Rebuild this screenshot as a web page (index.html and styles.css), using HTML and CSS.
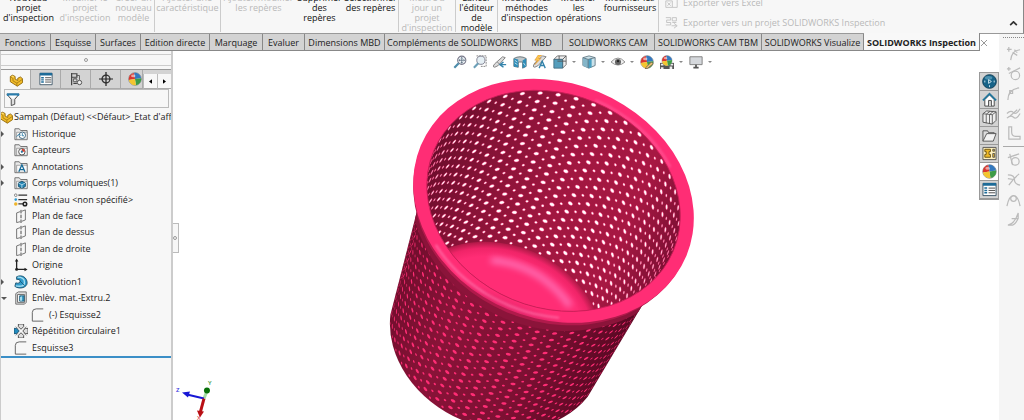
FILE: index.html
```
<!DOCTYPE html>
<html lang="fr">
<head>
<meta charset="utf-8">
<title>SOLIDWORKS</title>
<link rel="stylesheet" href="styles.css">
</head>
<body>
<svg class="defs" aria-hidden="true">
  <defs>
    <symbol id="part" viewBox="0 0 16 16"><path d="M1.500 4 4 2.500 7 4v3l3 1.500V6l3-1.500 2.500 2V11L9.500 15 1.500 10z" fill="#f3bd2b" stroke="#8d6509"/><path d="M1.500 4 4.500 6v3l4.500 2.500V15M9 11.500l6-4" fill="none" stroke="#a67b10"/><path d="m2.500 4 1.500-1 2 1.200-1.500 1z" fill="#ffe06f"/></symbol>
    <symbol id="list" viewBox="0 0 16 16"><path d="M1 1.500h14v13H1z" fill="#fff" stroke="#3a5365"/><path d="M1 1h14v3H1z" fill="#1d6b98"/><path d="M2.500 6.500h3M2.500 9h3M2.500 11.500h3" stroke="#1d6b98" stroke-width="1.600"/><path d="M7 6.500h7M7 9h7M7 11.500h7" stroke="#444"/></symbol>
    <symbol id="config" viewBox="0 0 16 16"><path d="M3 1v14M3 2h6v4H3M5 8h4M5 13h4" fill="none" stroke="#444" stroke-width="1.400"/><path d="M5 8h4v3H5z" fill="#ddd" stroke="#555"/><circle cx="12" cy="12" r="2.500" fill="#eee" stroke="#444"/><path d="M9 4h3v5" fill="none" stroke="#555"/></symbol>
    <symbol id="target" viewBox="0 0 16 16"><circle cx="8" cy="8" r="4.500" fill="none" stroke="#333" stroke-width="1.500"/><path d="M8 0v16M0 8h16" stroke="#222" stroke-width="1.400"/></symbol>
    <symbol id="ball" viewBox="0 0 16 16"><circle cx="8" cy="8" r="7.200" fill="#eee" stroke="#555" stroke-width=".6"/><path d="M8 8 1 9a7 7 0 0 1 6-8z" fill="#d9362f"/><path d="M8 8 7 1a7 7 0 0 1 8 6z" fill="#3479bf"/><path d="m8 8 7-1a7 7 0 0 1-6 8z" fill="#3d9c47"/><path d="m8 8 1 7a7 7 0 0 1-8-6z" fill="#f3c52e"/><ellipse cx="6" cy="4.500" rx="2.500" ry="1.600" fill="#fff" opacity=".55"/></symbol>
    <symbol id="funnel" viewBox="0 0 16 16"><path d="M1 2.500h14L10 8.500V14l-4 1.500v-7z" fill="#ddd" stroke="#444"/><path d="M1 1.500h14v3H1z" fill="#2b7dac"/><path d="M3 4h10l-5 4z" fill="#fff"/></symbol>
    <symbol id="folder" viewBox="0 0 16 16"><path d="M1 14.500V2h5l1.500 2H15v10.500z" fill="#e9e9e9" stroke="#666"/><path d="M3 14V6h12v8z" fill="#f8f8f8" stroke="#777" stroke-width=".7"/></symbol>
    <symbol id="history" viewBox="0 0 16 16"><use href="#folder"/><circle cx="9.500" cy="9.500" r="3.700" fill="#fff" stroke="#315a75"/><path d="M9.500 7v3h2M3 11l3-3 2 2" fill="none" stroke="#277ba8"/></symbol>
    <symbol id="sensor" viewBox="0 0 16 16"><use href="#folder"/><circle cx="9" cy="10" r="3.700" fill="#fff" stroke="#444"/><path d="M9 10V6.500A3.500 3.500 0 0 1 12.500 10z" fill="#d94332"/><circle cx="9" cy="10" r="1.300" fill="#2f799f"/></symbol>
    <symbol id="annot" viewBox="0 0 16 16"><use href="#folder"/><path d="m5.500 13.500 3.500-8 3.500 8M7 11h4" fill="none" stroke="#176b99" stroke-width="1.500"/></symbol>
    <symbol id="solid" viewBox="0 0 16 16"><use href="#folder"/><path d="m5 8 4-2 4 2v4l-4 2-4-2z" fill="#2384b3" stroke="#154b69"/><path d="m5 8 4 2 4-2M9 10v4" fill="none" stroke="#b7dceb"/></symbol>
    <symbol id="material" viewBox="0 0 16 16"><path d="M5 2.500h10M5 7.500h10M5 12.500h7" stroke="#333" stroke-width="1.400"/><circle cx="2" cy="2.500" r="1.500" fill="#fff" stroke="#777"/><circle cx="2" cy="7.500" r="1.500" fill="#2d9ad0"/><circle cx="2" cy="12.500" r="2" fill="#eeb42a"/><circle cx="12.500" cy="12.500" r="2" fill="#fff" stroke="#222" stroke-width="1.800"/></symbol>
    <symbol id="plane" viewBox="0 0 16 16"><path d="M3 4.500 7 3M9 2.500l4-1.500v11.500L9 14M7 14.500 3 15.500v-11" fill="none" stroke="#666"/><path d="M8 1v15" stroke="#333" stroke-dasharray="4 1.500"/></symbol>
    <symbol id="origin" viewBox="0 0 16 16"><path d="M3 3v10h10" fill="none" stroke="#222" stroke-width="1.500"/><path d="M1 4l2-3.500L5 4zM12 11l3.500 2L12 15z" fill="#222"/><circle cx="3" cy="13" r="1.700" fill="#222"/></symbol>
    <symbol id="revolve" viewBox="0 0 16 16"><path d="M3 2c6-3 12 1 12 7 0 5-8 8-14 4l1-4c3 1 5 0 5-2S5 5 3 5z" fill="#2f9acb" stroke="#174d69"/><path d="M4 2.500c5 0 8 2 8 6s-4 5-10 4" fill="none" stroke="#a4ddef" stroke-width="1.500"/><path d="m7 7 5 5" stroke="#16597b"/></symbol>
    <symbol id="cut" viewBox="0 0 16 16"><path d="m2 3 3-2h9v12l-2 2H2z" fill="#dedede" stroke="#666"/><path d="M4 4h8v9H4z" fill="#f5f5f5" stroke="#666"/><path d="M6.500 5.500h5v6h-5z" fill="#3c9fc9" stroke="#1e5c79"/><path d="M7 11V7l2-1v5z" fill="#b9e4f2"/></symbol>
    <symbol id="sketch" viewBox="0 0 16 16"><path d="M14 1H6Q1.500 1 1.500 5v10H14" fill="none" stroke="#555"/></symbol>
    <symbol id="pattern" viewBox="0 0 16 16"><path d="M0 5h3l3 3-3 3H0z" fill="#248bbd" stroke="#184e6d"/><path d="M16 5h-3l-3 3 3 3h3zM5 0h6v3L8 6 5 3zM5 16h6v-3l-3-3-3 3z" fill="#ddd" stroke="#444"/><path d="m2 3 3 3m6 0 3-3M2 13l3-3m6 0 3 3" stroke="#777"/></symbol>
    <symbol id="zoomfit" viewBox="0 0 16 16"><circle cx="10" cy="6" r="4.700" fill="#edf4f7" stroke="#778" stroke-width="1.200"/><path d="m1.500 14.500 5-5" stroke="#4d8caa" stroke-width="2.500"/><path d="M10 4v4M8 6h4" stroke="#678"/><path d="m10 2 1.500 2h-3zM10 10 8.500 8h3zM6 6l2-1.500v3zM14 6l-2-1.500v3z" fill="#678"/></symbol>
    <symbol id="zoomarea" viewBox="0 0 16 16"><path d="M4 1h11v12H9" fill="none" stroke="#777" stroke-dasharray="2 1"/><circle cx="9" cy="6" r="4.700" fill="#e5eff4" stroke="#778"/><path d="m1 14.500 5-5" stroke="#6ca0b8" stroke-width="2.500"/></symbol>
    <symbol id="prev" viewBox="0 0 16 16"><path d="m2 10 9-8 3 1-8 9-4 2-2-1z" fill="#ddd" stroke="#777"/><path d="m5 8 3 3" stroke="#777"/><path d="M15 11H9m3-3-4 3 4 3" fill="none" stroke="#3583ab" stroke-width="1.700"/></symbol>
    <symbol id="section" viewBox="0 0 16 16"><path d="M1 4q7-4 14 0v9l-4 2V8H6v6l-5-1z" fill="#c1c8cb" stroke="#606b70"/><path d="M1 4 6 5v9l-5-1zM11 6l4-2v9l-4 2z" fill="#2e8db8"/><path d="m2 6 3 2M2 9l3 2m7-2 2 3" stroke="#cbe8f2"/></symbol>
    <symbol id="annview" viewBox="0 0 16 16"><path d="m2 9 9-8 4 1-9 10-4 2-2-1z" fill="#ddd" stroke="#777"/><path d="m6 0-4 6h3l-3 5 7-7H6l4-4z" fill="#ffc94d" stroke="#d48627" stroke-width=".6"/><path d="m7 15 3.500-8 3.500 8m-6-3h5" fill="none" stroke="#3182aa" stroke-width="1.500"/></symbol>
    <symbol id="orient" viewBox="0 0 16 16"><path d="m1 5 4-4h10v10l-4 4V5z" fill="#eee" stroke="#666"/><path d="M1 5h10v10H1z" fill="#559ebc" stroke="#416b80"/><path d="m11 5 4-4M7 1v4m8 2H5" stroke="#555" fill="none"/></symbol>
    <symbol id="cube" viewBox="0 0 16 16"><path d="m1 3 7-2 7 2v9l-7 3-7-3z" fill="#cbe2ea" stroke="#607681"/><path d="m1 3 6 2v10l-6-3z" fill="#85b5c8"/><path d="m7 5 4-1v10l-4 1z" fill="#4aa0c3"/><path d="m1 3 6 2 8-2M7 5v10" fill="none" stroke="#607681"/></symbol>
    <symbol id="eye" viewBox="0 0 16 16"><path d="M0 8q8-9 16 0-8 7-16 0z" fill="#eee" stroke="#888"/><circle cx="8" cy="8" r="3.500" fill="#666"/><circle cx="8" cy="7" r="1.300" fill="#222"/></symbol>
    <symbol id="appearance" viewBox="0 0 16 16"><use href="#ball"/><path d="m7 14 6-6 2 2-6 5-3 1z" fill="#f0c477" stroke="#79664d"/></symbol>
    <symbol id="scene" viewBox="0 0 16 16"><path d="M0 9h16v7H0z" fill="#555"/><path d="M1 10h3v2H1zm11 0h3v2h-3zM1 14h3v2H1zm10-1h3v3h-3z" fill="#eee"/><use href="#ball" width="13" height="13" x="1.500"/></symbol>
    <symbol id="screen" viewBox="0 0 16 16"><path d="M1 2h14v9H1z" fill="#d5d8dc" stroke="#777"/><path d="M8 11v3m-3 .5h6" stroke="#555" stroke-width="2"/></symbol>
    <symbol id="globe" viewBox="0 0 16 16"><circle cx="8" cy="8" r="7.300" fill="#176388" stroke="#113f56"/><ellipse cx="7" cy="4" rx="4" ry="2" fill="#66a7c2" opacity=".7"/><path d="m7 6 3 2-3 2zM3 7v2m10-2v2M8 12v2" stroke="#d2e7ef" fill="none"/></symbol>
    <symbol id="home" viewBox="0 0 16 16"><path d="M3 8v7h10V8L8 3z" fill="#fff" stroke="#444"/><path d="M7 15V9h3v6" fill="#ddd" stroke="#444"/><path d="m1 9 7-7 7 7" fill="none" stroke="#24769b" stroke-width="2"/></symbol>
    <symbol id="books" viewBox="0 0 16 16"><path d="M1 4 5 1l10 1v9l-4 4-10-2z" fill="#eee" stroke="#555"/><path d="M4.500 4.500V14M8 5v9.500M11 5v10M1 4l10 1 4-3M4.500 4.500l4-3M8 5l4-3.500" fill="none" stroke="#555" stroke-width=".9"/></symbol>
    <symbol id="open" viewBox="0 0 16 16"><path d="M1 14V3h5l1 2h6v3" fill="#ddd" stroke="#555"/><path d="m1 14 4-8h10l-3 8z" fill="#f3f3f3" stroke="#555"/></symbol>
    <symbol id="palette" viewBox="0 0 16 16"><path d="M1 1.500h14v13H1z" fill="#fff2bd" stroke="#555"/><path d="M3 3.500h6v2.500H7.500v3H9V12H3V9h1.500V6H3z" fill="#efb927" stroke="#6d5514"/><path d="M11.500 3.500h2v2h-2zM11.500 8h2v4h-2z" fill="#efb927" stroke="#555"/></symbol>
  </defs>
</svg>

<header class="ribbon">
  <div class="commands">
    <button class="cmd w58">Nouveau<br>projet<br>d'inspection</button>
    <button class="cmd w55" disabled>Modifier le<br>projet<br>d'inspection</button>
    <button class="cmd w42 end" disabled>Créer un<br>nouveau<br>modèle</button>
    <button class="cmd w66 end" disabled>Ajouter une<br>caractéristique</button>
    <button class="cmd w74" disabled>Ajouter/modifier<br>les repères</button>
    <button class="cmd w47">Supprimer<br>des<br>repères</button>
    <button class="cmd w55 end">Sélectionner<br>des repères</button>
    <button class="cmd w58 end" disabled>Mettre à<br>jour un<br>projet<br>d'inspection</button>
    <button class="cmd w42 end">Lancer<br>l'éditeur<br>de<br>modèle</button>
    <button class="cmd w58">Modifier les<br>méthodes<br>d'inspection</button>
    <button class="cmd w47">Modifier<br>les<br>opérations</button>
    <button class="cmd w58 end">Modifier les<br>fournisseurs</button>
  </div>
  <div class="exports">
    <button class="export" disabled><svg viewBox="0 0 16 16"><path d="M1 6h8v8H1zM9 4h6v10H9M3 8l4 4m0-4-4 4m4-8h6M4 2h8"/></svg>Exporter vers Excel</button>
    <button class="export" disabled><svg viewBox="0 0 16 16"><path d="M1 2h6v3H2v3h5v3H1M9 2h5v4H9zM9 8h5M8 12h6m-3-3 4 3-4 3"/></svg>Exporter vers un projet SOLIDWORKS Inspection</button>
  </div>
  <button class="collapse" aria-label="Réduire"><svg viewBox="0 0 10 6"><path d="m1 5 4-4 4 4"/></svg></button>
</header>

<div class="tabrow">
  <nav class="tabs">
    <button>Fonctions</button><button>Esquisse</button><button>Surfaces</button><button>Edition directe</button><button>Marquage</button><button>Evaluer</button><button>Dimensions MBD</button><button>Compléments de SOLIDWORKS</button><button>MBD</button><button>SOLIDWORKS CAM</button><button>SOLIDWORKS CAM TBM</button><button>SOLIDWORKS Visualize</button><button class="active">SOLIDWORKS Inspection</button>
  </nav>
  <button class="close" aria-label="Fermer"><svg viewBox="0 0 8 8"><path d="m1 1 6 6m0-6-6 6"/></svg></button>
</div>

<main class="work">
  <aside class="panel">
    <div class="grip"><i class="knob"></i></div>
    <div class="paneltabs">
      <button class="active" aria-label="Arbre"><svg><use href="#part"/></svg></button>
      <button aria-label="Propriétés"><svg><use href="#list"/></svg></button>
      <button aria-label="Configurations"><svg><use href="#config"/></svg></button>
      <button aria-label="Cotes"><svg><use href="#target"/></svg></button>
      <button class="cutoff" aria-label="Apparences"><svg><use href="#ball"/></svg></button>
      <button class="arrow" aria-label="Précédent"><svg viewBox="0 0 4 6"><path d="M4 0v6L0 3z"/></svg></button>
      <button class="arrow" aria-label="Suivant"><svg viewBox="0 0 4 6"><path d="m0 0 4 3-4 3z"/></svg></button>
    </div>
    <label class="filter"><svg><use href="#funnel"/></svg><input type="text" aria-label="Filtre"></label>
    <ul class="tree">
      <li class="root"><svg><use href="#part"/></svg>Sampah (Défaut) &lt;&lt;Défaut&gt;_Etat d'affi</li>
      <li class="closed"><svg><use href="#history"/></svg>Historique</li>
      <li><svg><use href="#sensor"/></svg>Capteurs</li>
      <li class="closed"><svg><use href="#annot"/></svg>Annotations</li>
      <li class="closed"><svg><use href="#solid"/></svg>Corps volumiques(1)</li>
      <li><svg><use href="#material"/></svg>Matériau &lt;non spécifié&gt;</li>
      <li><svg><use href="#plane"/></svg>Plan de face</li>
      <li><svg><use href="#plane"/></svg>Plan de dessus</li>
      <li><svg><use href="#plane"/></svg>Plan de droite</li>
      <li><svg><use href="#origin"/></svg>Origine</li>
      <li class="closed"><svg><use href="#revolve"/></svg>Révolution1</li>
      <li class="opened"><svg><use href="#cut"/></svg>Enlèv. mat.-Extru.2</li>
      <li class="child"><svg><use href="#sketch"/></svg>(-) Esquisse2</li>
      <li><svg><use href="#pattern"/></svg>Répétition circulaire1</li>
      <li><svg><use href="#sketch"/></svg>Esquisse3</li>
    </ul>
  </aside>

  <section class="view">
    <svg class="model" viewBox="172 51 827 369" preserveAspectRatio="xMidYMin meet">
      <defs>
        <linearGradient id="inner"><stop offset="0" stop-color="#6b0d2b"/><stop offset=".2" stop-color="#851236"/><stop offset=".5" stop-color="#a01740"/><stop offset=".8" stop-color="#a71843"/><stop offset="1" stop-color="#7c1033"/></linearGradient>
        <linearGradient id="outer"><stop offset="0" stop-color="#6d0d2b"/><stop offset=".3" stop-color="#891338"/><stop offset=".65" stop-color="#7d1033"/><stop offset="1" stop-color="#570822"/></linearGradient>
        <radialGradient id="floor"><stop offset="0" stop-color="#ff2d75"/><stop offset=".84" stop-color="#ff2d75"/><stop offset=".93" stop-color="#f02468"/><stop offset="1" stop-color="#b01947"/></radialGradient>
        <linearGradient id="rim" x1="0" y1="0" x2="0" y2="1"><stop offset="0" stop-color="#ff2d75"/><stop offset=".95" stop-color="#ff2d75"/><stop offset="1" stop-color="#e3256a"/></linearGradient>
        <clipPath id="mouth"><ellipse rx="130" ry="107"/></clipPath>
        <clipPath id="body"><path d="M-124 50 -107 168A110 91 0 0 0 107 168L124 50A144 123 0 0 1-124 50z"/></clipPath>
        <filter id="soft" x="-20%" y="-40%" width="140%" height="180%"><feGaussianBlur stdDeviation="3"/></filter>
        <filter id="edge" x="-20%" y="-20%" width="140%" height="140%"><feGaussianBlur stdDeviation="1"/></filter>
      </defs>
      <g transform="translate(553 201) rotate(22.600)">
        <path d="M-124 50 -107 168A110 91 0 0 0 107 168L124 50z" fill="url(#outer)"/>
        <g clip-path="url(#body)"><path id="outerHoles" fill="#ff2d75"/><ellipse cy="5" rx="140" ry="119" fill="none" stroke="#8b143a" stroke-width="7"/></g>
        <ellipse cy="2" rx="143" ry="119" fill="#b01a4b"/>
        <ellipse rx="144" ry="118" fill="url(#rim)"/>
        <path d="M-92 86A139 114 0 0 0 50 106" fill="none" stroke="#ff66a2" stroke-width="2" filter="url(#edge)"/>
        <path d="M0-109A133 109 0 0 1 95-76" fill="none" stroke="#ff5594" stroke-width="2" filter="url(#edge)"/>
        <ellipse rx="130" ry="107" fill="url(#inner)"/>
        <g clip-path="url(#mouth)">
          <path id="innerHoles" fill="#fff" stroke="#ff2d75" stroke-width=".4"/>
          <ellipse cy="144" rx="107" ry="89" fill="url(#floor)"/>
          <path d="M-35 79Q12 64 56 91" fill="none" stroke="#ff70b6" stroke-width="6" filter="url(#soft)"/>
        </g>
        <ellipse rx="130" ry="107" fill="none" stroke="#c81d56" stroke-width=".8"/>
      </g>
      <g class="triad">
        <path d="m203 399 4-10" stroke="#a5dda5" stroke-width="3"/><circle cx="206" cy="391" r="3" fill="#087008"/>
        <path d="m203 399-17-4" stroke="#1717d5" stroke-width="2"/><path d="m181 393 8-1-2 6z" fill="#1717d5"/>
        <path d="m203 399-4 15" stroke="#b80f14" stroke-width="3"/><path d="m196 411 7 1-4 6z" fill="#b80f14"/>
        <text x="175" y="392" fill="#3a3ae0">Z</text><text x="207" y="385" fill="#4ba04b">Y</text><text x="196" y="420" fill="#e05050">X</text>
      </g>
    </svg>
    <button class="splitter" aria-label="Volet"><i class="knob"></i></button>
    <div class="hud">
      <button aria-label="Zoom au mieux"><svg><use href="#zoomfit"/></svg></button><button aria-label="Zoom fenêtre"><svg><use href="#zoomarea"/></svg></button><button aria-label="Vue précédente"><svg><use href="#prev"/></svg></button><button aria-label="Vue en coupe"><svg><use href="#section"/></svg></button><button aria-label="Vues d'annotations"><svg><use href="#annview"/></svg></button><button class="drop" aria-label="Orientation"><svg><use href="#orient"/></svg></button><button class="drop" aria-label="Style d'affichage"><svg><use href="#cube"/></svg></button><button class="drop" aria-label="Cacher ou montrer"><svg><use href="#eye"/></svg></button><button aria-label="Apparence"><svg><use href="#appearance"/></svg></button><button class="drop" aria-label="Scène"><svg><use href="#scene"/></svg></button><button class="drop" aria-label="Paramètres de vue"><svg><use href="#screen"/></svg></button>
    </div>
    <div class="taskpane">
      <button aria-label="Plateforme"><svg><use href="#globe"/></svg></button><button aria-label="Accueil"><svg><use href="#home"/></svg></button><button aria-label="Bibliothèque"><svg><use href="#books"/></svg></button><button aria-label="Fichiers"><svg><use href="#open"/></svg></button><button aria-label="Palette de vues"><svg><use href="#palette"/></svg></button><button class="active" aria-label="Apparences"><svg><use href="#ball"/></svg></button><button aria-label="Propriétés"><svg><use href="#list"/></svg></button>
    </div>
  </section>
</main>

<aside class="sidebar">
  <button aria-label="Congé"><svg viewBox="0 0 16 16"><path d="M3 1v5M1 3.500h5M5 15C6 8 8 5 15 4M7 7l5 3M9 4l3 3"/></svg></button>
  <button aria-label="Tangente"><svg viewBox="0 0 16 16"><path d="M3 1v4M1 3h4M3 8l12-6"/><circle cx="10" cy="10" r="4.500"/></svg></button>
  <button aria-label="Arc"><svg viewBox="0 0 16 16"><path d="M2 15C2 7 6 3 14 2"/><path d="M4 5h3v3H4z"/></svg></button>
  <button aria-label="Courbes"><svg viewBox="0 0 16 16"><path d="M1 8q4-4 7-1t7-4M1 13q4-4 7-1t7-4M4 11l8-7"/></svg></button>
  <button aria-label="Angle"><svg viewBox="0 0 16 16"><path d="M3 1v13h12v-3H10Q6 11 6 6V1z"/></svg></button>
  <hr>
  <button aria-label="Cercle"><svg viewBox="0 0 16 16"><path d="M2 6 14 2M4 2l3 12"/><circle cx="10" cy="10" r="4"/></svg></button>
  <button aria-label="Intersection"><svg viewBox="0 0 16 16"><path d="M2 3q7 0 7 5t6 6M14 2Q8 7 3 14M2 7l6 1"/></svg></button>
  <button aria-label="Parabole"><svg viewBox="0 0 16 16"><path d="M1 15C4 0 12 0 15 15"/><circle cx="8" cy="7" r="3"/></svg></button>
  <button aria-label="Surface"><svg viewBox="0 0 16 16"><path d="M2 14Q9 13 13 1v6q-3 6-6 7zM6 7h7"/></svg></button>
</aside>
<script src="basket.js"></script>
</body>
</html>
```
FILE: styles.css
```
* { box-sizing: border-box; }
body {
  margin: 0;
  min-height: 100vh;
  display: grid;
  grid-template: 34px 17px 1fr / 1fr 25px;
  background: #fff;
  color: #222;
  font: 9px/10px "Open Sans", "Noto Sans", sans-serif;
  overflow: hidden;
}
button { margin: 0; padding: 0; border: 0; background: none; color: inherit; font: inherit; }
svg { display: block; }
.defs { position: absolute; width: 0; height: 0; }

.ribbon {
  grid-column: 1 / 3;
  display: flex;
  background: #f7f7f7;
  border-right: 1px solid #888;
  border-bottom: 1px solid #999;
  overflow: hidden;
}
.commands { display: flex; height: 39px; margin-top: -7px; flex: none; }
.cmd { display: flex; justify-content: center; text-align: center; white-space: nowrap; font-weight: 500; color: #111; }
.cmd:disabled, .export:disabled { color: #b9b9b9; font-weight: 400; }
.cmd.end { border-right: 1px solid #ccc; }
.w42 { width: 42px; }
.w47 { width: 47px; }
.w55 { width: 56px; }
.w58 { width: 57px; }
.w66 { width: 66px; }
.w74 { width: 75px; }
.exports { display: flex; flex-direction: column; gap: 7px; flex: 1; margin-top: -4px; padding-left: 6px; }
.export { display: flex; align-items: center; gap: 5px; height: 13px; white-space: nowrap; }
.export svg { width: 13px; height: 13px; fill: none; stroke: #bbb; }
.collapse { align-self: flex-end; padding: 0 5px 7px; }
.collapse svg { width: 9px; height: 5px; fill: none; stroke: #333; stroke-width: 2; }

.tabrow { display: flex; }
.tabs { display: grid; grid-template-columns: 51px 45px 45px 69px 53px 42px 80px 136px 42px 92px 107px 102px 116px; }
.tabs button { padding-top: 1px; background: #d3d3d3; border-right: 1px solid #888; border-bottom: 1px solid #888; white-space: nowrap; }
.tabs .active { background: #f8f8f8; font-weight: 700; margin-top: -1px; padding-top: 2px; }
.close { padding: 5px 0 0; align-self: flex-start; }
.close svg { width: 8px; height: 8px; fill: none; stroke: #999; }

.work { display: grid; grid-template-columns: 173px 1fr; min-width: 0; }
.panel { background: #f7f7f7; border-right: 2px solid #ccc; border-left: 1px solid #ccc; padding-top: 3px; overflow: hidden; }
.grip { height: 12px; border: solid #ccc; border-width: 1px 0; display: flex; justify-content: center; align-items: center; }
.knob { width: 4px; height: 4px; border: 1px solid #999; border-radius: 50%; }
.paneltabs { display: flex; height: 20px; margin-top: 3px; border-top: 1px solid #999; background: #d3d3d3; }
.paneltabs button { width: 30px; border-right: 1px solid #aaa; border-bottom: 1px solid #aaa; display: flex; justify-content: center; align-items: center; }
.paneltabs .active { background: #f7f7f7; border-bottom: 0; }
.paneltabs svg { width: 14px; height: 14px; flex: none; }
.paneltabs .cutoff { width: 22px; padding-left: 6px; }
.paneltabs .arrow { width: 14px; margin-top: 4px; background: #f7f7f7; border-left: 1px solid #bbb; border-right: 0; }
.paneltabs .arrow svg { width: 3px; height: 5px; }
.filter { display: flex; align-items: center; height: 19px; margin: 0 2px 0 3px; padding-left: 1px; border: 1px solid #bbb; }
.filter svg { width: 14px; height: 14px; flex: none; }
.filter input { flex: 1; min-width: 0; border: 0; background: none; outline: 0; font: inherit; }
.tree { display: grid; grid-auto-rows: 1fr; height: 250px; margin: 0; padding: 1px 0 0; list-style: none; border-bottom: 2px solid #3b8fc7; }
.tree li { position: relative; display: flex; align-items: center; gap: 4px; padding-left: 13px; white-space: nowrap; overflow: hidden; }
.tree svg { width: 14px; height: 14px; flex: none; }
.tree .root { padding-left: 0; gap: 1px; margin-left: -2px; }
.tree .child { padding-left: 30px; }
.tree .closed::before, .tree .opened::before { content: ""; position: absolute; left: 0; border: 3px solid transparent; }
.tree .closed::before { border-left-color: #555; border-right-width: 0; }
.tree .opened::before { border-top-color: #555; border-bottom-width: 0; }

.view { position: relative; overflow: hidden; }
.model { width: 100%; position: absolute; top: 0; left: 0; }
.triad text { font: 600 6px "Open Sans", sans-serif; }
.splitter { position: absolute; left: -2px; top: 172px; width: 8px; height: 30px; background: #f7f7f7; border: 1px solid #bbb; border-left: 0; display: flex; align-items: center; justify-content: center; }
.hud { position: absolute; top: 4px; left: 0; right: 0; padding-left: 280px; display: flex; gap: 6px; }
.hud button { display: flex; align-items: center; height: 14px; flex: none; }
.hud svg { width: 14px; height: 14px; }
.hud .drop::after { content: ""; border: solid transparent; border-width: 2px 2px 0; border-top-color: #888; margin-left: 5px; }
.taskpane { position: absolute; right: 0; top: 21px; width: 20px; border: 1px solid #999; background: #d3d3d3; }
.taskpane button { display: flex; align-items: center; justify-content: center; width: 18px; height: 18px; border-bottom: 1px solid #999; }
.taskpane .active { background: #fff; }
.taskpane svg { width: 15px; height: 15px; }

.sidebar { grid-area: 2 / 2 / 4 / 3; background: #f5f5f5; padding: 12px 0 0 4px; display: flex; flex-direction: column; gap: 5px; position: relative; }
.sidebar::before { content: ""; position: absolute; top: 3px; left: 4px; right: 0; border-top: 1px dotted #888; }
.sidebar svg { width: 15px; height: 15px; margin: 0 auto; fill: none; stroke: #bbb; stroke-width: 1.3; }
.sidebar hr { width: 100%; margin: 0; border: 0; border-top: 1px solid #aaa; }
```
FILE: basket.js
```
// Perforations laid out on a tapered cylinder, seen at an angle.
const TILT = 0.827;
const COLS = 88;
const PITCH = 8;

function holes(topRadius, bottomRadius, from, to, depth, start) {
  let d = "";
  const radius = t => topRadius + (bottomRadius - topRadius) * t / depth;
  for (let c = 0; c < COLS; c++) {
    const a = c / COLS * Math.PI * 2;
    if (a < from || a > to) continue;
    const small = c % 2;
    const w = small ? 1.5 : 2.7;
    const h = small ? 1.1 : 1.6;
    for (let t = start + (small ? PITCH / 2 : 0); t < depth; t += PITCH) {
      for (let k = 0; k < 8; k++) {
        const q = k * Math.PI / 4;
        const y = t + h * Math.sin(q);
        const r = radius(y);
        const p = a + w * Math.cos(q) / r;
        d += (k ? "L" : "M") + (r * Math.cos(p)).toFixed(2) + " " + (y + r * TILT * Math.sin(p)).toFixed(2);
      }
      d += "z";
    }
  }
  return d;
}

document.getElementById("innerHoles").setAttribute("d", holes(130, 108, 2.9, 6.6, 144, 3));
document.getElementById("outerHoles").setAttribute("d", holes(129, 110, 0, 3.3, 146, 12));
```
